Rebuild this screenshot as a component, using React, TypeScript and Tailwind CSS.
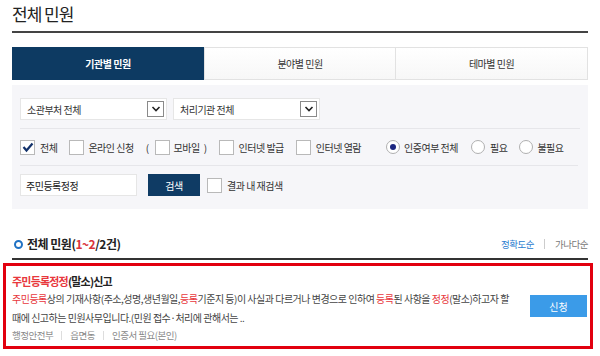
import React from "react";

const F = "font-['Noto_Sans_CJK_KR','Liberation_Sans',sans-serif]";

function Chevron() {
  return (
    <svg width="10" height="10" viewBox="0 0 10 10">
      <polyline points="1.5,3 5,6.5 8.5,3" fill="none" stroke="#222" strokeWidth="1.6" />
    </svg>
  );
}

function Select({ label }: { label: string }) {
  return (
    <div className="flex h-[22px] w-[147px] items-center justify-between border border-[#e6e6e6] bg-white pl-[6px] pr-[2px]">
      <span className="text-[10px] tracking-[-0.5px] text-[#333]">{label}</span>
      <span className="flex h-[16px] w-[17px] items-center justify-center border border-[#8a8a8a] bg-white">
        <Chevron />
      </span>
    </div>
  );
}

function Box({ checked = false }: { checked?: boolean }) {
  return (
    <span className="flex h-[15px] w-[15px] shrink-0 items-center justify-center border border-[#b9b9b9] bg-white">
      {checked && (
        <svg width="12" height="12" viewBox="0 0 12 12">
          <polyline points="1.5,6 4.5,9.5 10.5,2.5" fill="none" stroke="#12316a" strokeWidth="2.2" />
        </svg>
      )}
    </span>
  );
}

function Radio({ on = false }: { on?: boolean }) {
  return (
    <span className="flex h-[14px] w-[14px] shrink-0 items-center justify-center rounded-full border border-[#b0b0b0] bg-white">
      {on && <span className="h-[6px] w-[6px] rounded-full bg-[#1b2680]" />}
    </span>
  );
}

const R = ({ children }: { children: React.ReactNode }) => (
  <span className="text-[#e8383d]">{children}</span>
);

export default function App() {
  return (
    <div className={`h-[356px] w-[600px] overflow-hidden bg-white px-3 text-[#333] ${F}`}>
      <div className="border-b-2 border-[#444] pb-[7px] pt-[4px]">
        <h1 className="text-[17px] leading-[20px] tracking-[-1px] text-[#222]">전체 민원</h1>
      </div>

      <div className="mt-[14px] grid h-[33px] grid-cols-3 text-[10px] tracking-[-0.5px]">
        <div className="flex items-center justify-center bg-[#0d3a62] font-bold text-white">기관별 민원</div>
        <div className="flex items-center justify-center border border-[#e2e2e2] bg-gradient-to-b from-white to-[#f7f7f7]">분야별 민원</div>
        <div className="flex items-center justify-center border border-l-0 border-[#e2e2e2] bg-gradient-to-b from-white to-[#f7f7f7]">테마별 민원</div>
      </div>

      <div className="mt-[5px] bg-[#f6f6f9] px-[8px] text-[10px] tracking-[-0.5px]">
        <div className="flex gap-[6px] border-b border-[#e6e6ea] pb-[8px] pt-[13px] pr-[2px]">
          <Select label="소관부처 전체" />
          <Select label="처리기관 전체" />
        </div>
        <div className="mr-[2px] flex h-[37px] items-center border-b border-[#e6e6ea]">
          <Box checked />
          <span className="ml-[5px]">전체</span>
          <span className="ml-[12px]"><Box /></span>
          <span className="ml-[4px]">온라인 신청</span>
          <span className="ml-[12px]">(</span>
          <span className="ml-[6px]"><Box /></span>
          <span className="ml-[4px]">모바일</span>
          <span className="ml-[4px]">)</span>
          <span className="ml-[12px]"><Box /></span>
          <span className="ml-[5px]">인터넷 발급</span>
          <span className="ml-[12px]"><Box /></span>
          <span className="ml-[5px]">인터넷 열람</span>
          <span className="ml-[25px]"><Radio on /></span>
          <span className="ml-[4px]">인증여부 전체</span>
          <span className="ml-[13px]"><Radio /></span>
          <span className="ml-[5px]">필요</span>
          <span className="ml-[12px]"><Radio /></span>
          <span className="ml-[4px]">불필요</span>
        </div>
        <div className="flex items-center pb-[13px] pt-[8px]">
          <div className="flex h-[22px] w-[117px] items-center border border-[#e6e6e6] bg-white pl-[5px] text-[#222]">주민등록정정</div>
          <button className="ml-[11px] h-[22px] w-[52px] bg-[#0f3b64] text-white">검색</button>
          <span className="ml-[7px]"><Box /></span>
          <span className="ml-[5px]">결과 내 재검색</span>
        </div>
      </div>

      <div className="mt-[25px] flex h-[20px] items-center justify-between tracking-[-0.5px]">
        <div className="flex items-center">
          <span className="ml-[2px] h-[9px] w-[9px] rounded-full border-[2.5px] border-[#1f72c4]" />
          <span className="ml-[4px] text-[12px] font-semibold text-[#222]">
            전체 민원(<span className="text-[#d9343a]">1~2</span>/2건)
          </span>
        </div>
        <div className="flex items-center text-[9.5px]">
          <span className="text-[#2a7cd0]">정확도순</span>
          <span className="mx-[10px] h-[10px] w-px bg-[#ccc]" />
          <span className="text-[#777]">가나다순</span>
        </div>
      </div>
      <div className="mt-[4px] border-b-2 border-[#333]" />

      <div className="-ml-[9px] -mr-[5px] mt-[3px] flex items-center border-[3px] border-[#e2000f] pl-[6px] pr-[3px]">
        <div className="flex-1 pb-[3px] pt-[7px] tracking-[-0.5px]">
          <div className="text-[11px] font-bold leading-[16px] tracking-[-0.8px] text-[#222]">
            <R>주민등록정정</R>(말소)신고
          </div>
          <div className="text-[10px] leading-[19px] text-[#444]">
            <R>주민등록</R>상의 기재사항(주소,성명,생년월일,<R>등록</R>기준지 등)이 사실과 다르거나 변경으로 인하여 <R>등록</R>된 사항을 <R>정정</R>(말소)하고자 할
            <br />
            때에 신고하는 민원사무입니다.(민원 접수·처리에 관해서는 ..
          </div>
          <div className="flex items-center text-[9.5px] leading-[16px] text-[#888]">
            <span>행정안전부</span>
            <span className="mx-[8px] h-[9px] w-px bg-[#ddd]" />
            <span>읍면동</span>
            <span className="mx-[8px] h-[9px] w-px bg-[#ddd]" />
            <span>인증서 필요(본인)</span>
          </div>
        </div>
        <button className="h-[22px] w-[57px] shrink-0 bg-[#3b9be8] text-[10px] text-white">신청</button>
      </div>
    </div>
  );
}
